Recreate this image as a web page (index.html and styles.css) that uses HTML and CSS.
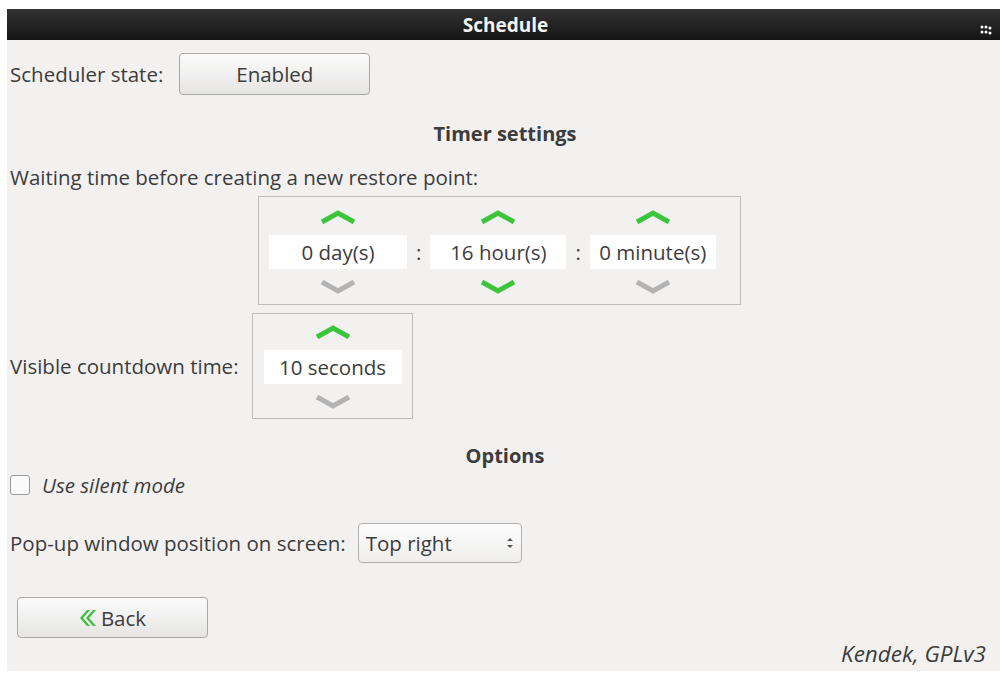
FILE: index.html
```html
<!DOCTYPE html>
<html lang="en">
<head>
    <meta charset="UTF-8">
    <title>Schedule</title>
    <link rel="stylesheet" href="styles.css">
</head>
<body>
    <div class="window">
        <div class="titlebar">
            <span class="title">Schedule</span>
            <span class="grip">
                <svg width="14" height="12" viewBox="0 0 14 12"><g fill="#fff"><circle cx="2" cy="2" r="1.5"/><circle cx="6" cy="2" r="1.5"/><circle cx="10" cy="3" r="1.5"/><circle cx="2" cy="7" r="1.5"/><circle cx="6" cy="7" r="1.5"/><circle cx="10" cy="8" r="1.5"/></g></svg>
            </span>
        </div>

        <div class="content">
            <div class="row state-row">
                <span class="label">Scheduler state:</span>
                <button class="btn state-btn">Enabled</button>
            </div>

            <h3 class="section timer">Timer settings</h3>
            <p class="label wait-label">Waiting time before creating a new restore point:</p>

            <div class="spin-wrap">
                <div class="spin-box">
                    <div class="spinner">
                        <svg class="arrow up on" viewBox="0 0 36 14"><path d="M2 12 L18 3 L34 12"/></svg>
                        <div class="field f-day">0 day(s)</div>
                        <svg class="arrow down" viewBox="0 0 36 14"><path d="M2 2 L18 11 L34 2"/></svg>
                    </div>
                    <span class="colon">:</span>
                    <div class="spinner">
                        <svg class="arrow up on" viewBox="0 0 36 14"><path d="M2 12 L18 3 L34 12"/></svg>
                        <div class="field f-hour">16 hour(s)</div>
                        <svg class="arrow down on" viewBox="0 0 36 14"><path d="M2 2 L18 11 L34 2"/></svg>
                    </div>
                    <span class="colon">:</span>
                    <div class="spinner">
                        <svg class="arrow up on" viewBox="0 0 36 14"><path d="M2 12 L18 3 L34 12"/></svg>
                        <div class="field f-min">0 minute(s)</div>
                        <svg class="arrow down" viewBox="0 0 36 14"><path d="M2 2 L18 11 L34 2"/></svg>
                    </div>
                </div>
            </div>

            <div class="row countdown-row">
                <span class="label">Visible countdown time:</span>
                <div class="spin-box small">
                    <div class="spinner">
                        <svg class="arrow up on" viewBox="0 0 36 14"><path d="M2 12 L18 3 L34 12"/></svg>
                        <div class="field f-sec">10 seconds</div>
                        <svg class="arrow down" viewBox="0 0 36 14"><path d="M2 2 L18 11 L34 2"/></svg>
                    </div>
                </div>
            </div>

            <h3 class="section options">Options</h3>

            <label class="row check-row">
                <span class="checkbox"></span>
                <span class="italic">Use silent mode</span>
            </label>

            <div class="row popup-row">
                <span class="label">Pop-up window position on screen:</span>
                <div class="select">
                    <span>Top right</span>
                    <svg width="8" height="14" viewBox="0 0 8 14"><path d="M1 5 L4 2 L7 5 Z M1 9 L4 12 L7 9 Z" fill="#555"/></svg>
                </div>
            </div>

            <button class="btn back-btn">
                <svg width="18" height="18" viewBox="0 0 18 18"><path d="M8 1 L1 9 L8 17 L11 17 L4 9 L11 1 Z M14 1 L7 9 L14 17 L17 17 L10 9 L17 1 Z" fill="#3dbd3d"/></svg>
                Back
            </button>

            <div class="credit">Kendek, GPLv3</div>
        </div>
    </div>
</body>
</html>
```

FILE: styles.css
```css
body {
    margin: 0;
    background-color: #ffffff;
    font-family: "Open Sans", "Noto Sans", sans-serif;
    color: #3c3c3c;
}
.window {
    margin: 9px 0 0 7px;
    height: 662px;
    background-color: #f2f1f0;
}
.titlebar {
    height: 31px;
    background: linear-gradient(#333333, #151515);
    display: flex;
    align-items: center;
    justify-content: center;
    position: relative;
}
.title {
    color: #f4f4f4;
    font-weight: bold;
    font-size: 19px;
    margin-left: 4px;
}
.grip {
    position: absolute;
    right: 6px;
    top: 11px;
}
.content {
    padding: 0 0 0 3px;
    position: relative;
    height: 631px;
}
.row {
    display: flex;
    align-items: center;
}
.label {
    font-size: 20.5px;
}
.state-row {
    padding-top: 13px;
    gap: 16px;
}
.btn {
    font-family: inherit;
    color: #3c3c3c;
    font-size: 20.5px;
    border: 1px solid #a8a8a8;
    border-radius: 4px;
    background: linear-gradient(#fbfbfb, #e6e5e4);
    box-shadow: inset 0 1px 0 #fff;
}
.state-btn {
    width: 191px;
    height: 42px;
}
.section {
    margin: 0;
    text-align: center;
    font-size: 20px;
    font-weight: bold;
    color: #3c3c3c;
}
.timer {
    margin-top: 25px;
}
.wait-label {
    margin: 16px 0 0 0;
}
.spin-wrap {
    padding: 5px 0 0 248px;
}
.spin-box {
    display: inline-flex;
    align-items: center;
    gap: 8px;
    border: 1px solid #bdbcbb;
    padding: 13px 24px 10px 10px;
}
.spinner {
    display: flex;
    flex-direction: column;
    align-items: center;
    gap: 11px;
}
.arrow {
    width: 36px;
    height: 14px;
    fill: none;
    stroke: #b3b3b3;
    stroke-width: 5;
}
.arrow.on {
    stroke: #3cc43c;
}
.field {
    background-color: #ffffff;
    font-size: 20.5px;
    height: 34px;
    line-height: 34px;
    text-align: center;
}
.f-day {
    width: 138px;
}
.f-hour {
    width: 136px;
}
.f-min {
    width: 126px;
    white-space: nowrap;
}
.f-sec {
    width: 138px;
}
.colon {
    font-size: 20.5px;
    padding: 0 1px;
}
.countdown-row {
    margin-top: 8px;
    gap: 13px;
}
.spin-box.small {
    padding: 11px 10px 9px 11px;
}
.options {
    margin-top: 23px;
}
.check-row {
    margin-top: 2px;
    gap: 12px;
}
.checkbox {
    width: 18px;
    height: 18px;
    border: 1px solid #9a9a9a;
    border-radius: 3px;
    background-color: #fafafa;
}
.italic {
    font-style: italic;
    font-size: 20.5px;
}
.popup-row {
    margin-top: 24px;
    gap: 12px;
}
.select {
    width: 148px;
    height: 38px;
    display: flex;
    align-items: center;
    justify-content: space-between;
    padding: 0 7px;
    font-size: 20.5px;
    border: 1px solid #b0b0b0;
    border-radius: 4px;
    background: linear-gradient(#fdfdfd, #efeeed);
}
.back-btn {
    margin: 34px 0 0 7px;
    width: 191px;
    height: 41px;
    display: flex;
    align-items: center;
    justify-content: center;
    gap: 4px;
}
.credit {
    position: absolute;
    right: 14px;
    bottom: 2px;
    font-style: italic;
    font-size: 22.5px;
}
```
